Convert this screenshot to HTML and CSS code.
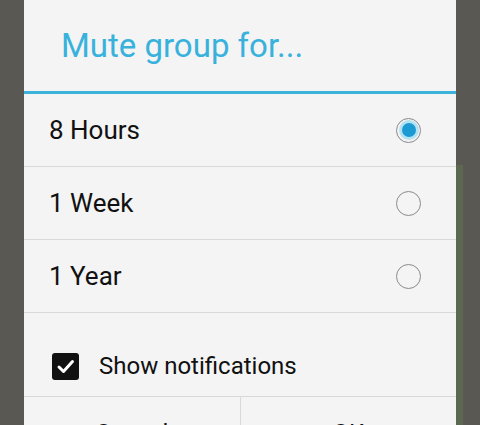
FILE: index.html
```html
<!DOCTYPE html>
<html lang="en">
<head>
    <meta charset="UTF-8">
    <meta name="viewport" content="width=device-width, initial-scale=1.0">
    <title>Mute group</title>
    <link rel="stylesheet" href="styles.css">
</head>
<body>
    <div class="screen">
        <div class="gutter"></div>

        <div class="dialog">
            <div class="title">Mute group for...</div>
            <div class="title-rule"></div>

            <div class="options">
                <div class="option">
                    <span>8 Hours</span>
                    <span class="radio checked"></span>
                </div>
                <div class="option">
                    <span>1 Week</span>
                    <span class="radio"></span>
                </div>
                <div class="option">
                    <span>1 Year</span>
                    <span class="radio"></span>
                </div>
            </div>

            <div class="notify">
                <span class="checkbox">
                    <svg width="27" height="27" viewBox="0 0 27 27">
                        <path d="M7 14 L11.5 18.5 L20.5 8.5" fill="none" stroke="#fff" stroke-width="3" stroke-linecap="round" stroke-linejoin="round"/>
                    </svg>
                </span>
                <span>Show notifications</span>
            </div>

            <div class="buttons">
                <div class="btn">Cancel</div>
                <div class="btn">OK</div>
            </div>
        </div>

        <div class="side">
            <div class="side-strip"></div>
        </div>
    </div>
</body>
</html>
```

FILE: styles.css
```css
html, body {
    margin: 0;
    padding: 0;
}
body {
    width: 480px;
    height: 425px;
    overflow: hidden;
    background-color: #595852;
    font-family: Roboto, "Liberation Sans", sans-serif;
}
.screen {
    display: flex;
    height: 425px;
}
.gutter {
    width: 24px;
    flex: none;
}
.dialog {
    width: 432px;
    flex: none;
    background-color: #f4f4f4;
    display: flex;
    flex-direction: column;
}
.dialog > * {
    flex-shrink: 0;
}
.title {
    height: 91px;
    box-sizing: border-box;
    padding: 27px 0 0 37px;
    font-size: 33px;
    line-height: 38px;
    color: #38b2dc;
}
.title-rule {
    height: 3px;
    background-color: #3bb3da;
}
.option {
    height: 72px;
    border-bottom: 1px solid #d9d9d9;
    display: flex;
    align-items: center;
    justify-content: space-between;
    padding: 0 35px 0 25px;
    font-size: 26px;
    color: #111;
}
.radio {
    width: 23px;
    height: 23px;
    border: 1.5px solid #8a8a8a;
    border-radius: 50%;
    display: flex;
    align-items: center;
    justify-content: center;
}
.radio.checked::after {
    content: "";
    width: 14px;
    height: 14px;
    border-radius: 50%;
    background-color: #1b9ad3;
    box-shadow: 0 0 0 3px #b5e2f3;
}
.notify {
    height: 84px;
    box-sizing: border-box;
    padding: 40px 0 0 28px;
    border-bottom: 1px solid #d9d9d9;
    display: flex;
    align-items: flex-start;
    gap: 20px;
    font-size: 24px;
    line-height: 27px;
    color: #111;
}
.checkbox {
    width: 27px;
    height: 27px;
    border-radius: 3px;
    background-color: #111;
    flex: none;
}
.checkbox svg {
    display: block;
}
.buttons {
    display: flex;
    height: 60px;
}
.btn {
    flex: 1;
    text-align: center;
    padding-top: 22px;
    font-size: 24px;
    color: #111;
}
.btn + .btn {
    border-left: 1px solid #d9d9d9;
}
.side {
    flex: 1;
    padding-top: 165px;
}
.side-strip {
    width: 7px;
    height: 260px;
    background-color: #5d6850;
}
```
